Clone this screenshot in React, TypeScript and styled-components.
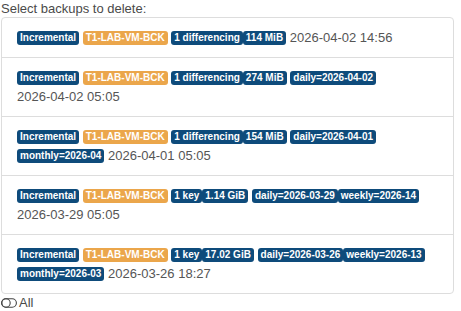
import React, {FunctionComponent} from 'react';
import styled, {createGlobalStyle} from 'styled-components';

type Tone = 'blue' | 'orange';

type Tag = {
    label: string;
    tone?: Tone;
};

type Backup = {
    groups: Tag[][];
    date: string;
};

const GlobalStyle = createGlobalStyle`
    body {
        margin: 0;
        background: #fff;
        font-family: "Liberation Sans", Arial, sans-serif;
        font-size: 13px;
        color: #555;
    }
`;

const StyledWrapper = styled.div`
    width: 453px;
    margin-left: 1px;
`;

const Heading = styled.div`
    line-height: 17px;
    color: #4a4a4a;
`;

const List = styled.div`
    display: flex;
    flex-direction: column;
    border: 1px solid #ddd;
    border-radius: 4px;
`;

const Item = styled.div`
    padding: 10px 15px;
    line-height: 19px;
    border-top: 1px solid #ddd;

    &:first-child {
        border-top: none;
    }
`;

const Group = styled.span`
    white-space: nowrap;
`;

const Badge = styled.span<{ $tone: Tone }>`
    display: inline-block;
    padding: 2px 3px;
    font-size: 10px;
    line-height: 10px;
    font-weight: bold;
    color: #fff;
    border-radius: 3px;
    vertical-align: 1px;
    background: ${props => props.$tone === 'orange' ? '#eba64b' : '#0e4b7b'};
`;

const DateText = styled.span`
    color: #555;
    white-space: nowrap;
`;

const Footer = styled.div`
    display: flex;
    align-items: center;
    gap: 2px;
    line-height: 18px;
    color: #4a4a4a;
`;

const ToggleIcon = () => (
    <svg width="16" height="10" viewBox="0 0 16 10">
        <rect x="0.6" y="0.8" width="14.8" height="8.4" rx="4.2" fill="none" stroke="#444" strokeWidth="1.1"/>
        <circle cx="5" cy="5" r="4.2" fill="none" stroke="#444" strokeWidth="1.1"/>
    </svg>
);

const base: Tag[][] = [[{label: 'Incremental'}], [{label: 'T1-LAB-VM-BCK', tone: 'orange'}]];

const backups: Backup[] = [
    {groups: [...base, [{label: '1 differencing'}, {label: '114 MiB'}]], date: '2026-04-02 14:56'},
    {groups: [...base, [{label: '1 differencing'}, {label: '274 MiB'}], [{label: 'daily=2026-04-02'}]], date: '2026-04-02 05:05'},
    {groups: [...base, [{label: '1 differencing'}, {label: '154 MiB'}], [{label: 'daily=2026-04-01'}], [{label: 'monthly=2026-04'}]], date: '2026-04-01 05:05'},
    {groups: [...base, [{label: '1 key'}, {label: '1.14 GiB'}], [{label: 'daily=2026-03-29'}, {label: 'weekly=2026-14'}]], date: '2026-03-29 05:05'},
    {groups: [...base, [{label: '1 key'}, {label: '17.02 GiB'}], [{label: 'daily=2026-03-26'}, {label: 'weekly=2026-13'}], [{label: 'monthly=2026-03'}]], date: '2026-03-26 18:27'},
];

const App: FunctionComponent = () => {
    return (
        <StyledWrapper>
            <GlobalStyle/>
            <Heading>Select backups to delete:</Heading>
            <List>
                {backups.map((b, i) => (
                    <Item key={i}>
                        {b.groups.map((g, j) => (
                            <React.Fragment key={j}>
                                <Group>
                                    {g.map((t, k) => <Badge key={k} $tone={t.tone || 'blue'}>{t.label}</Badge>)}
                                </Group>
                                {' '}
                            </React.Fragment>
                        ))}
                        <DateText>{b.date}</DateText>
                    </Item>
                ))}
            </List>
            <Footer>
                <ToggleIcon/>
                <span>All</span>
            </Footer>
        </StyledWrapper>
    );
};

export default App;
